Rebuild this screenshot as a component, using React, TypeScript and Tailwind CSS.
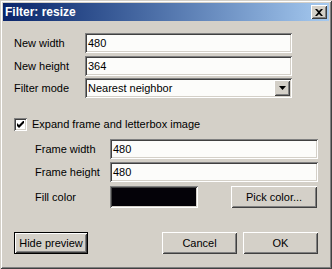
import React from "react";

const sunken =
  "shadow-[inset_1px_1px_#808080,inset_-1px_-1px_#ffffff,inset_2px_2px_#404040,inset_-2px_-2px_#d4d0c8]";
const raised =
  "shadow-[inset_1px_1px_#ffffff,inset_-1px_-1px_#404040,inset_2px_2px_#d4d0c8,inset_-2px_-2px_#808080]";

function Field({ value, className }: { value: string; className: string }) {
  return (
    <div className={`h-[20px] bg-[#fcfcfa] ${sunken} flex items-center pl-[3px] ${className}`}>
      <span className="leading-none">{value}</span>
    </div>
  );
}

function Button({ label, className }: { label: string; className: string }) {
  return (
    <div className={`bg-[#d4d0c8] ${raised} flex items-center justify-center ${className}`}>
      <span>{label}</span>
    </div>
  );
}

export default function App() {
  return (
    <div
      className="w-[332px] h-[269px] bg-[#d4d0c8] p-[3px] flex flex-col text-[11px] text-black shadow-[inset_1px_1px_#d4d0c8,inset_-1px_-1px_#404040,inset_2px_2px_#ffffff,inset_-2px_-2px_#808080]"
      style={{ fontFamily: '"Liberation Sans", Arial, sans-serif' }}
    >
      {/* title bar */}
      <div className="h-[18px] flex items-center justify-between pl-[2px] pr-[2px] bg-gradient-to-r from-[#0a246a] to-[#a6caf0]">
        <span className="text-white font-bold text-[12px]">Filter: resize</span>
        <div className={`w-[16px] h-[14px] bg-[#d4d0c8] ${raised} flex items-center justify-center`}>
          <svg width="8" height="7" viewBox="0 0 8 7">
            <path d="M0 0h2l2 2 2-2h2L5 3.5 8 7H6L4 5 2 7H0l3-3.5z" fill="#000" />
          </svg>
        </div>
      </div>

      {/* body */}
      <div className="flex flex-col pl-[11px]">
        <div className="flex items-center mt-[12px] h-[20px]">
          <span className="w-[71px]">New width</span>
          <Field value="480" className="w-[207px]" />
        </div>
        <div className="flex items-center mt-[3px] h-[20px]">
          <span className="w-[71px]">New height</span>
          <Field value="364" className="w-[207px]" />
        </div>
        <div className="flex items-center mt-[2px] h-[20px]">
          <span className="w-[71px]">Filter mode</span>
          <div className={`w-[207px] h-[20px] bg-[#fcfcfa] ${sunken} flex items-center justify-between pl-[3px] pr-[2px]`}>
            <span>Nearest neighbor</span>
            <div className={`w-[16px] h-[16px] bg-[#d4d0c8] ${raised} flex items-center justify-center`}>
              <svg width="7" height="4" viewBox="0 0 7 4">
                <path d="M0 0h7L3.5 4z" fill="#000" />
              </svg>
            </div>
          </div>
        </div>

        <div className="flex items-center mt-[20px] h-[13px]">
          <div className={`w-[13px] h-[13px] bg-white ${sunken} flex items-center justify-center`}>
            <svg width="7" height="7" viewBox="0 0 7 7">
              <path d="M0 2v3l2 2 5-5V-1L2 4z" fill="#000" />
            </svg>
          </div>
          <span className="ml-[5px]">Expand frame and letterbox image</span>
        </div>

        <div className="flex flex-col pl-[21px]">
          <div className="flex items-center mt-[8px] h-[20px]">
            <span className="w-[75px]">Frame width</span>
            <Field value="480" className="w-[208px]" />
          </div>
          <div className="flex items-center mt-[3px] h-[20px]">
            <span className="w-[75px]">Frame height</span>
            <Field value="480" className="w-[208px]" />
          </div>
          <div className="flex items-center mt-[4px] h-[22px]">
            <span className="w-[75px]">Fill color</span>
            <div className={`w-[88px] h-[22px] bg-[#040208] ${sunken}`} />
            <Button label="Pick color..." className="ml-[33px] w-[86px] h-[22px]" />
          </div>
        </div>

        <div className="flex items-center mt-[24px] h-[22px] pr-[11px]">
          <div className="w-[74px] h-[22px] border border-black">
            <Button label="Hide preview" className="w-full h-full" />
          </div>
          <Button label="Cancel" className="ml-auto w-[75px] h-[22px]" />
          <Button label="OK" className="ml-[6px] w-[75px] h-[22px]" />
        </div>
      </div>
    </div>
  );
}
